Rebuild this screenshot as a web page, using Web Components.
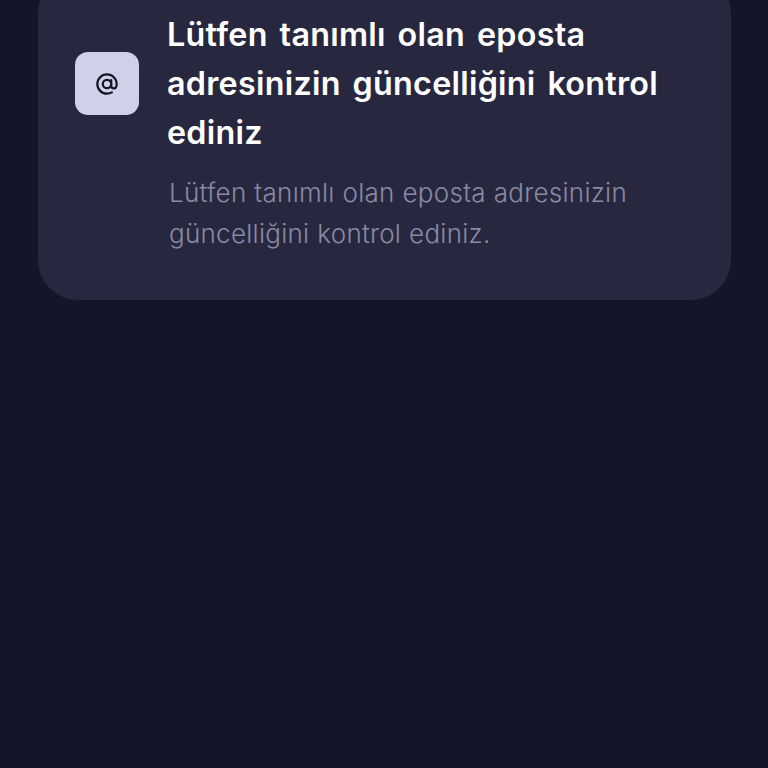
<!DOCTYPE html>
<html lang="tr">
<head>
<meta charset="utf-8">
<title>Bildirim</title>
<style>
  html, body { margin: 0; height: 100%; background: #14152a; overflow: hidden; }
</style>
</head>
<body>
<notice-list>
  <notice-card>
    <icon-tile slot="icon"></icon-tile>
    <span slot="title">Lütfen tanımlı olan eposta adresinizin güncelliğini kontrol ediniz</span>
    Lütfen tanımlı olan eposta adresinizin güncelliğini kontrol ediniz.
  </notice-card>
</notice-list>

<script>
  class NoticeList extends HTMLElement {
    constructor() {
      super();
      this.attachShadow({ mode: 'open' }).innerHTML = [
        '<style>',
        ':host{display:block;padding:0 37px 0 38px;margin-top:-27px;font-family:Inter,"Noto Sans",sans-serif}',
        '</style>',
        '<slot></slot>'
      ].join('');
    }
  }

  class NoticeCard extends HTMLElement {
    constructor() {
      super();
      this.attachShadow({ mode: 'open' }).innerHTML = [
        '<style>',
        ':host{display:grid;grid-template-columns:64px 1fr;column-gap:28px;padding:37px 37px 46px;background:#27283f;border-radius:40px}',
        '.icon{display:flex;align-items:center}',
        '.title{font-size:32.3px;line-height:49px;font-weight:560;letter-spacing:.26px;word-spacing:3.5px;color:#fff;margin-right:30px}',
        '.body{grid-column:2;margin:15px 0 0 2px;font-size:26px;line-height:41px;font-weight:300;letter-spacing:.27px;word-spacing:.3px;color:#8a8aa6}',
        '</style>',
        '<div class="icon"><slot name="icon"></slot></div>',
        '<div class="title"><slot name="title"></slot></div>',
        '<div class="body"><slot></slot></div>'
      ].join('');
    }
  }

  class IconTile extends HTMLElement {
    constructor() {
      super();
      this.attachShadow({ mode: 'open' }).innerHTML = [
        '<style>',
        ':host{display:flex;align-items:center;justify-content:center;width:64px;height:63px;border-radius:13px;background:#d0d0e8}',
        'svg{display:block}',
        '</style>',
        '<svg width="28" height="28" viewBox="0 0 24 24" fill="none" stroke="#14152a" stroke-width="1.9" stroke-linecap="round" aria-hidden="true">',
        '<circle cx="12" cy="12" r="3.6"/>',
        '<path d="M15.6 8.6v4.9c0 1.4 1 2.3 2.2 2.3s2.5-1.1 2.5-3.8c0-4.6-3.7-8.2-8.3-8.2S3.7 7.4 3.7 12s3.7 8.3 8.3 8.3c1.6 0 2.9-.3 4.2-1.1"/>',
        '</svg>'
      ].join('');
    }
  }

  customElements.define('notice-list', NoticeList);
  customElements.define('notice-card', NoticeCard);
  customElements.define('icon-tile', IconTile);
</script>
</body>
</html>
